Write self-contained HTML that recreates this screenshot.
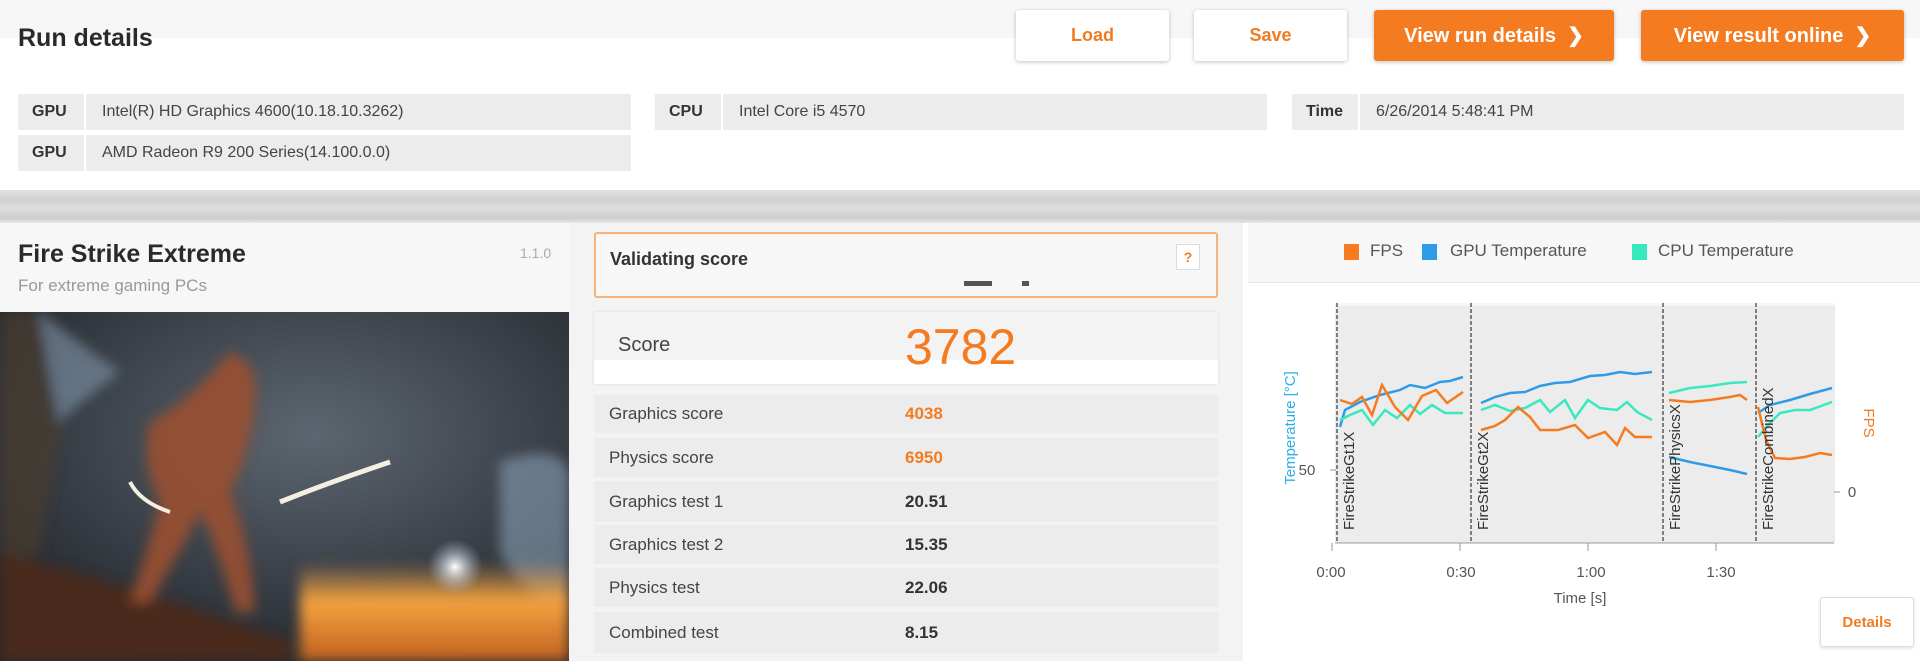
<!DOCTYPE html>
<html><head><meta charset="utf-8"><style>
*{margin:0;padding:0;box-sizing:border-box}
body{width:1920px;height:661px;overflow:hidden;background:#fff;font-family:"Liberation Sans",sans-serif;position:relative;color:#333}
.a{position:absolute}
.btn{position:absolute;top:10px;height:51px;border-radius:3px;font-weight:bold;font-size:18px;display:flex;align-items:center;justify-content:center}
.w{background:#fff;color:#f07c22;box-shadow:0 1px 4px rgba(0,0,0,.25)}
.o{background:#f47b20;color:#fff;box-shadow:0 1px 4px rgba(0,0,0,.25);font-size:20px}
.cell{position:absolute;background:#ececec;height:36px;font-size:16px;display:flex;align-items:center}
.cell b{display:flex;align-items:center;height:100%;width:68px;padding-left:14px;border-right:2px solid #fff;font-size:16px;color:#333}
.cell span{padding-left:16px;color:#444}
.row{position:absolute;left:594px;width:624px;background:#ececec;font-size:17px;color:#444}
.row .l{position:absolute;left:15px;top:50%;transform:translateY(-50%)}
.row .v{position:absolute;left:311px;top:50%;transform:translateY(-50%);font-weight:bold;color:#333}
</style></head><body>
<div class="a" style="left:0;top:0;width:1920px;height:70px;background:#f7f7f7"></div>
<div class="a" style="left:0;top:38px;width:1920px;height:32px;background:#fff"></div>
<div class="a" style="left:18px;top:24px;font-size:25px;font-weight:bold;color:#2a2a2a">Run details</div>
<div class="btn w" style="left:1016px;width:153px">Load</div>
<div class="btn w" style="left:1194px;width:153px">Save</div>
<div class="btn o" style="left:1374px;width:240px">View run details&nbsp;&nbsp;❯</div>
<div class="btn o" style="left:1641px;width:263px">View result online&nbsp;&nbsp;❯</div>

<div class="cell" style="left:18px;top:94px;width:613px"><b>GPU</b><span>Intel(R) HD Graphics 4600(10.18.10.3262)</span></div>
<div class="cell" style="left:18px;top:135px;width:613px"><b>GPU</b><span>AMD Radeon R9 200 Series(14.100.0.0)</span></div>
<div class="cell" style="left:655px;top:94px;width:612px"><b>CPU</b><span>Intel Core i5 4570</span></div>
<div class="cell" style="left:1292px;top:94px;width:612px"><b>Time</b><span>6/26/2014 5:48:41 PM</span></div>

<div class="a" style="left:0;top:190px;width:1920px;height:33px;background:linear-gradient(#e2e2e2,#cfcfcf 30%,#dedede 55%,#cdcdcd 85%,#e6e6e6)"></div>
<div class="a" style="left:0;top:223px;width:1920px;height:438px;background:#f3f3f3"></div>

<!-- left -->
<div class="a" style="left:0;top:223px;width:569px;height:89px;background:#f7f7f7"></div>
<div class="a" style="left:18px;top:240px;font-size:25px;font-weight:bold;color:#2a2a2a">Fire Strike Extreme</div>
<div class="a" style="left:18px;top:276px;font-size:17px;color:#999">For extreme gaming PCs</div>
<div class="a" style="left:520px;top:245px;font-size:14px;color:#aaa">1.1.0</div>
<svg class="a" style="left:0;top:312px" width="569" height="349">
<defs>
<radialGradient id="sky" cx="55%" cy="35%" r="70%"><stop offset="0" stop-color="#5d6670"/><stop offset=".6" stop-color="#3a4048"/><stop offset="1" stop-color="#23272c"/></radialGradient>
<linearGradient id="fire" x1="0" y1="0" x2="0" y2="1"><stop offset="0" stop-color="#f0a040" stop-opacity="0"/><stop offset=".4" stop-color="#f4a340"/><stop offset="1" stop-color="#c06020"/></linearGradient>
<radialGradient id="orb"><stop offset="0" stop-color="#fff"/><stop offset="1" stop-color="#9fb4c8" stop-opacity="0"/></radialGradient>
<filter id="bl"><feGaussianBlur stdDeviation="6"/></filter>
</defs>
<rect width="569" height="349" fill="url(#sky)"/>
<g filter="url(#bl)">
<path d="M0 0 L40 0 L60 120 L40 240 L0 260Z" fill="#4a3a30" opacity=".7"/>
<path d="M40 0 Q90 40 120 60 Q80 90 60 110 Q50 60 40 0Z" fill="#8fa8c0" opacity=".5"/>
<path d="M500 150 Q560 130 569 160 L569 300 Q520 280 500 240Z" fill="#8fa8c0" opacity=".55"/>
<rect x="300" y="250" width="269" height="99" fill="url(#fire)"/>
<path d="M0 240 Q150 280 290 330 L290 349 L0 349Z" fill="#4a2a1c"/>
<path d="M230 40 Q260 50 255 90 Q250 140 230 180 Q250 230 255 300 L235 300 Q220 240 200 200 Q180 240 150 290 L130 290 Q150 230 160 190 Q140 150 150 110 Q190 90 230 40Z" fill="#9a5030" opacity=".9"/>
</g>
<path d="M280 190 Q330 170 390 150" stroke="#f4efe0" stroke-width="5" fill="none"/>
<path d="M130 170 Q140 190 170 200" stroke="#f4efe0" stroke-width="4" fill="none"/>
<circle cx="455" cy="255" r="28" fill="url(#orb)"/>
</svg>

<!-- middle -->
<div class="a" style="left:594px;top:232px;width:624px;height:66px;border:2px solid #f7b27a;border-radius:3px;background:#f7f7f7"></div>
<div class="a" style="left:610px;top:249px;font-size:18px;font-weight:bold;color:#333">Validating score</div>
<div class="a" style="left:1176px;top:244px;width:24px;height:26px;background:#fff;border:1px solid #ddd;color:#f07c22;font-size:14px;font-weight:bold;text-align:center;line-height:24px">?</div>
<div class="a" style="left:964px;top:281px;width:28px;height:5px;background:#555"></div>
<div class="a" style="left:1022px;top:281px;width:7px;height:5px;background:#555"></div>
<div class="a" style="left:594px;top:312px;width:624px;height:72px;background:#fff;box-shadow:0 0 3px rgba(0,0,0,.1)"></div>
<div class="a" style="left:594px;top:312px;width:624px;height:48px;background:#f3f3f3"></div>
<div class="a" style="left:618px;top:334px;font-size:20px;color:#444">Score</div>
<div class="a" style="left:905px;top:318px;font-size:50px;color:#f47b20">3782</div>
<div class="row" style="top:395px;height:38px"><span class="l">Graphics score</span><span class="v" style="color:#f47b20">4038</span></div>
<div class="row" style="top:438px;height:39px"><span class="l">Physics score</span><span class="v" style="color:#f47b20">6950</span></div>
<div class="row" style="top:481px;height:41px"><span class="l">Graphics test 1</span><span class="v">20.51</span></div>
<div class="row" style="top:525px;height:39px"><span class="l">Graphics test 2</span><span class="v">15.35</span></div>
<div class="row" style="top:568px;height:39px"><span class="l">Physics test</span><span class="v">22.06</span></div>
<div class="row" style="top:612px;height:41px"><span class="l">Combined test</span><span class="v">8.15</span></div>

<!-- right -->
<div class="a" style="left:1243px;top:223px;width:677px;height:438px;background:#fff"></div>
<div class="a" style="left:1248px;top:223px;width:672px;height:60px;background:#f7f7f7;border-bottom:1px solid #e6e6e6"></div>
<div class="a" style="left:1344px;top:244px;width:15px;height:16px;background:#f47b20"></div>
<div class="a" style="left:1370px;top:241px;font-size:17px;color:#555">FPS</div>
<div class="a" style="left:1422px;top:244px;width:15px;height:16px;background:#2e9be8"></div>
<div class="a" style="left:1450px;top:241px;font-size:17px;color:#555">GPU Temperature</div>
<div class="a" style="left:1632px;top:244px;width:15px;height:16px;background:#3ae8c0"></div>
<div class="a" style="left:1658px;top:241px;font-size:17px;color:#555">CPU Temperature</div>
<svg class="a" style="left:1243px;top:283px" width="677" height="378" font-family="Liberation Sans, sans-serif">
<g transform="translate(-1243,-283)">
<rect x="1335" y="303" width="500" height="240" fill="#ececec"/>
<rect x="1335" y="303" width="500" height="3" fill="#f6f6f6"/>
<g stroke="#444" stroke-width="1.3" stroke-dasharray="4,2">
<line x1="1337" y1="303" x2="1337" y2="543"/><line x1="1471" y1="303" x2="1471" y2="543"/>
<line x1="1663" y1="303" x2="1663" y2="543"/><line x1="1756" y1="303" x2="1756" y2="543"/>
</g>
<g stroke="#999" stroke-width="1">
<line x1="1335" y1="543" x2="1834" y2="543"/>
<line x1="1332" y1="543" x2="1332" y2="551"/><line x1="1460" y1="543" x2="1460" y2="551"/><line x1="1588" y1="543" x2="1588" y2="551"/><line x1="1716" y1="543" x2="1716" y2="551"/>
<line x1="1330" y1="470" x2="1336" y2="470"/><line x1="1834" y1="492" x2="1840" y2="492"/>
</g>
<g fill="none" stroke-width="2.5">
<polyline stroke="#2e9be8" points="1340,427 1345,410 1360,402 1380,395 1400,390 1410,385 1425,388 1440,382 1450,381 1463,377"/>
<polyline stroke="#3ae8c0" points="1340,420 1350,415 1362,410 1373,425 1385,410 1397,418 1410,405 1420,414 1432,405 1445,413 1463,413"/>
<polyline stroke="#f47b20" points="1340,400 1352,404 1362,397 1372,415 1382,385 1395,407 1408,420 1422,396 1436,390 1447,403 1463,392"/>
<polyline stroke="#2e9be8" points="1481,403 1495,397 1510,393 1525,392 1540,386 1555,383 1570,382 1590,376 1605,375 1620,372 1635,374 1652,372"/>
<polyline stroke="#3ae8c0" points="1481,410 1495,405 1510,411 1525,408 1540,400 1550,412 1565,400 1575,418 1588,400 1600,408 1617,410 1627,402 1637,412 1652,420"/>
<polyline stroke="#f47b20" points="1481,430 1495,426 1505,420 1518,407 1530,417 1540,430 1558,430 1575,425 1588,438 1605,432 1617,445 1625,428 1635,437 1652,437"/>
<polyline stroke="#3ae8c0" points="1669,393 1690,388 1710,386 1730,383 1747,382"/>
<polyline stroke="#f47b20" points="1669,400 1690,402 1710,400 1730,397 1740,395 1747,400"/>
<polyline stroke="#2e9be8" points="1669,457 1690,462 1710,466 1730,470 1747,474"/>
<polyline stroke="#2e9be8" points="1758,413 1770,405 1790,400 1810,394 1832,388"/>
<polyline stroke="#3ae8c0" points="1758,437 1768,425 1780,413 1795,410 1810,410 1832,402"/>
<polyline stroke="#f47b20" points="1758,407 1766,440 1775,458 1790,459 1805,457 1820,453 1832,455"/>
</g>
<g font-size="15" fill="#333">
<text transform="translate(1354,530) rotate(-90)">FireStrikeGt1X</text>
<text transform="translate(1488,530) rotate(-90)">FireStrikeGt2X</text>
<text transform="translate(1680,530) rotate(-90)">FireStrikePhysicsX</text>
<text transform="translate(1773,530) rotate(-90)">FireStrikeCombinedX</text>
</g>
<g font-size="15" fill="#555" text-anchor="middle">
<text x="1331" y="577">0:00</text><text x="1461" y="577">0:30</text><text x="1591" y="577">1:00</text><text x="1721" y="577">1:30</text>
<text x="1580" y="603">Time [s]</text>
<text x="1307" y="475">50</text>
<text x="1852" y="497">0</text>
</g>
<text transform="translate(1295,428) rotate(-90)" font-size="15" fill="#2eaee8" text-anchor="middle">Temperature [°C]</text>
<text transform="translate(1864,423) rotate(90)" font-size="15" fill="#f47b20" text-anchor="middle">FPS</text>
</g>
</svg>
<div class="a" style="left:1820px;top:597px;width:94px;height:50px;background:#fff;border:1px solid #ddd;border-radius:3px;box-shadow:0 1px 3px rgba(0,0,0,.15);color:#f07c22;font-weight:bold;font-size:15px;display:flex;align-items:center;justify-content:center">Details</div>
</body></html>
